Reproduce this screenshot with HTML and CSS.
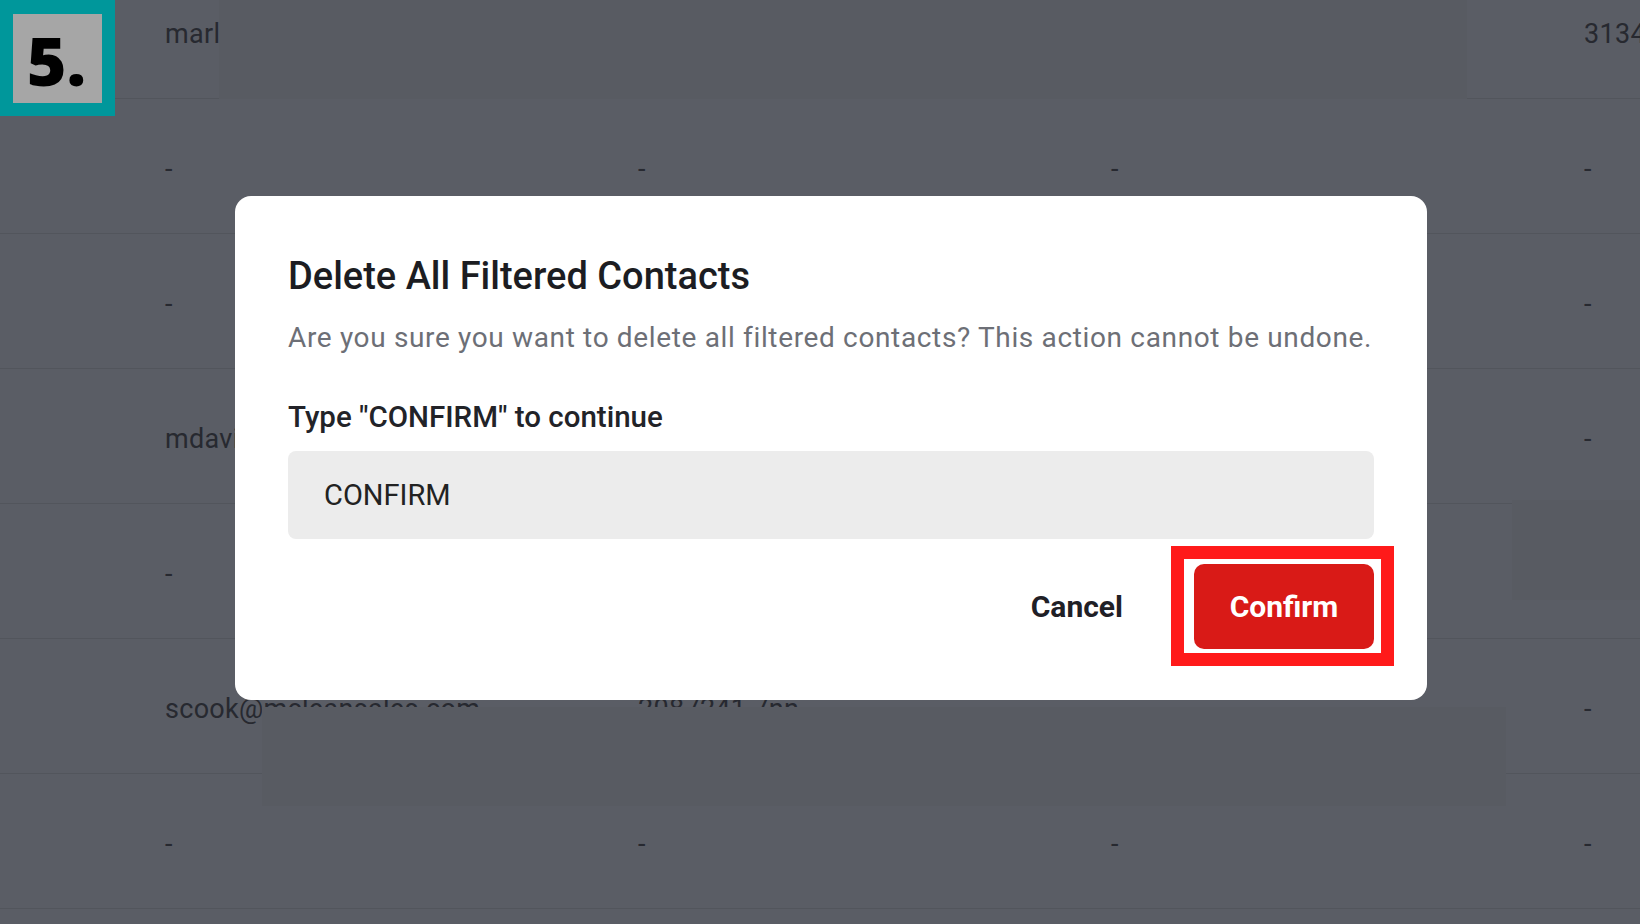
FILE: index.html
```html
<!DOCTYPE html>
<html lang="en">
<head>
<meta charset="utf-8">
<title>Delete All Filtered Contacts</title>
<link rel="stylesheet" href="styles.css">
</head>
<body>
<div class="page">
  <div class="table">
    <div class="row"><span class="cell">marlene@mcleansales.com</span><span class="cell"></span><span class="cell"></span><span class="cell">31340</span></div>
    <div class="row"><span class="cell">-</span><span class="cell">-</span><span class="cell">-</span><span class="cell">-</span></div>
    <div class="row"><span class="cell">-</span><span class="cell"></span><span class="cell"></span><span class="cell">-</span></div>
    <div class="row"><span class="cell">mdavis@mcleansales.com</span><span class="cell"></span><span class="cell"></span><span class="cell">-</span></div>
    <div class="row"><span class="cell">-</span><span class="cell"></span><span class="cell"></span><span class="cell"></span></div>
    <div class="row"><span class="cell">scook@mcleansales.com</span><span class="cell">2087241 7nn</span><span class="cell"></span><span class="cell">-</span></div>
    <div class="row"><span class="cell">-</span><span class="cell">-</span><span class="cell">-</span><span class="cell">-</span></div>
    <div class="row"></div>
  </div>

  <div class="patch patch-top"></div>
  <div class="patch patch-right"></div>
  <div class="patch patch-bottom"></div>

  <div class="step-badge"><span class="step-num">5.</span></div>

  <div class="modal">
    <h2 class="modal-title">Delete All Filtered Contacts</h2>
    <p class="modal-desc">Are you sure you want to delete all filtered contacts? This action cannot be undone.</p>
    <label class="modal-label" for="confirm-input">Type "CONFIRM" to continue</label>
    <div class="modal-input" id="confirm-input">CONFIRM</div>
    <div class="modal-actions">
      <button class="btn btn-cancel">Cancel</button>
      <button class="btn btn-confirm">Confirm</button>
    </div>
  </div>
</div>
</body>
</html>
```

FILE: styles.css
```css
* { box-sizing: border-box; }
html, body {
  margin: 0;
  padding: 0;
  width: 1640px;
  height: 924px;
  overflow: hidden;
  background: #5a5d65;
  font-family: Roboto, "Liberation Sans", sans-serif;
}
.page {
  position: relative;
  width: 1640px;
  height: 924px;
  overflow: hidden;
}
.table {
  margin-top: -36px;
}
.row {
  display: grid;
  grid-template-columns: 473px 473px 473px 473px;
  padding-left: 165px;
  padding-top: 5px;
  height: 135px;
  align-items: center;
  border-bottom: 1px solid #52555c;
  font-size: 27px;
  letter-spacing: 0.3px;
  color: #272930;
  white-space: nowrap;
}
.row:last-child {
  border-bottom: 0;
  height: 30px;
}
.cell {
  overflow: visible;
}
.patch {
  position: absolute;
  background: #585b62;
}
.patch-top { left: 219px; top: 0; width: 1248px; height: 99px; }
.patch-right { left: 1512px; top: 500px; width: 128px; height: 100px; }
.patch-bottom { left: 262px; top: 707px; width: 1244px; height: 99px; }

.step-badge {
  position: absolute;
  left: 0;
  top: 0;
  width: 115px;
  height: 116px;
  background: #00979b;
  padding: 14px 13px 13px 13px;
}
.step-num {
  display: flex;
  align-items: center;
  justify-content: center;
  width: 89px;
  height: 89px;
  background: #a6a6a6;
  color: #000;
  font-family: "Open Sans", sans-serif;
  font-weight: 800;
  font-size: 68px;
  line-height: 1;
  padding-right: 2px;
  padding-top: 2px;
}

.modal {
  position: absolute;
  left: 235px;
  top: 196px;
  width: 1192px;
  background: #fff;
  border-radius: 16px;
  padding: 58px 53px 51px 53px;
}
.modal-title {
  margin: 0;
  font-size: 38px;
  line-height: 44px;
  font-weight: 500;
  color: #1c1d22;
}
.modal-desc {
  margin: 22px 0 0 0;
  font-size: 28px;
  letter-spacing: 0.65px;
  line-height: 36px;
  color: #6d6f76;
  white-space: nowrap;
}
.modal-label {
  display: block;
  margin-top: 43px;
  font-size: 29.5px;
  line-height: 36px;
  font-weight: 500;
  color: #222328;
}
.modal-input {
  margin-top: 16px;
  height: 88px;
  background: #ececec;
  border-radius: 8px;
  padding-left: 36px;
  display: flex;
  align-items: center;
  font-size: 29px;
  color: #222;
}
.modal-actions {
  margin-top: 25px;
  display: flex;
  justify-content: flex-end;
  align-items: center;
  gap: 36px;
}
.btn {
  font-family: Roboto, "Liberation Sans", sans-serif;
  font-size: 30px;
  font-weight: 700;
  height: 85px;
  border: 0;
  border-radius: 10px;
  padding: 0 35px;
  cursor: pointer;
}
.btn-cancel {
  background: transparent;
  color: #1f2026;
}
.btn-confirm {
  position: relative;
  width: 180px;
  padding: 0;
  background: #d91a17;
  color: #fff;
}
.btn-confirm::after {
  content: "";
  position: absolute;
  left: -23px;
  right: -20px;
  top: -18px;
  bottom: -17px;
  border: 13px solid #ff1a1a;
  pointer-events: none;
}
```
